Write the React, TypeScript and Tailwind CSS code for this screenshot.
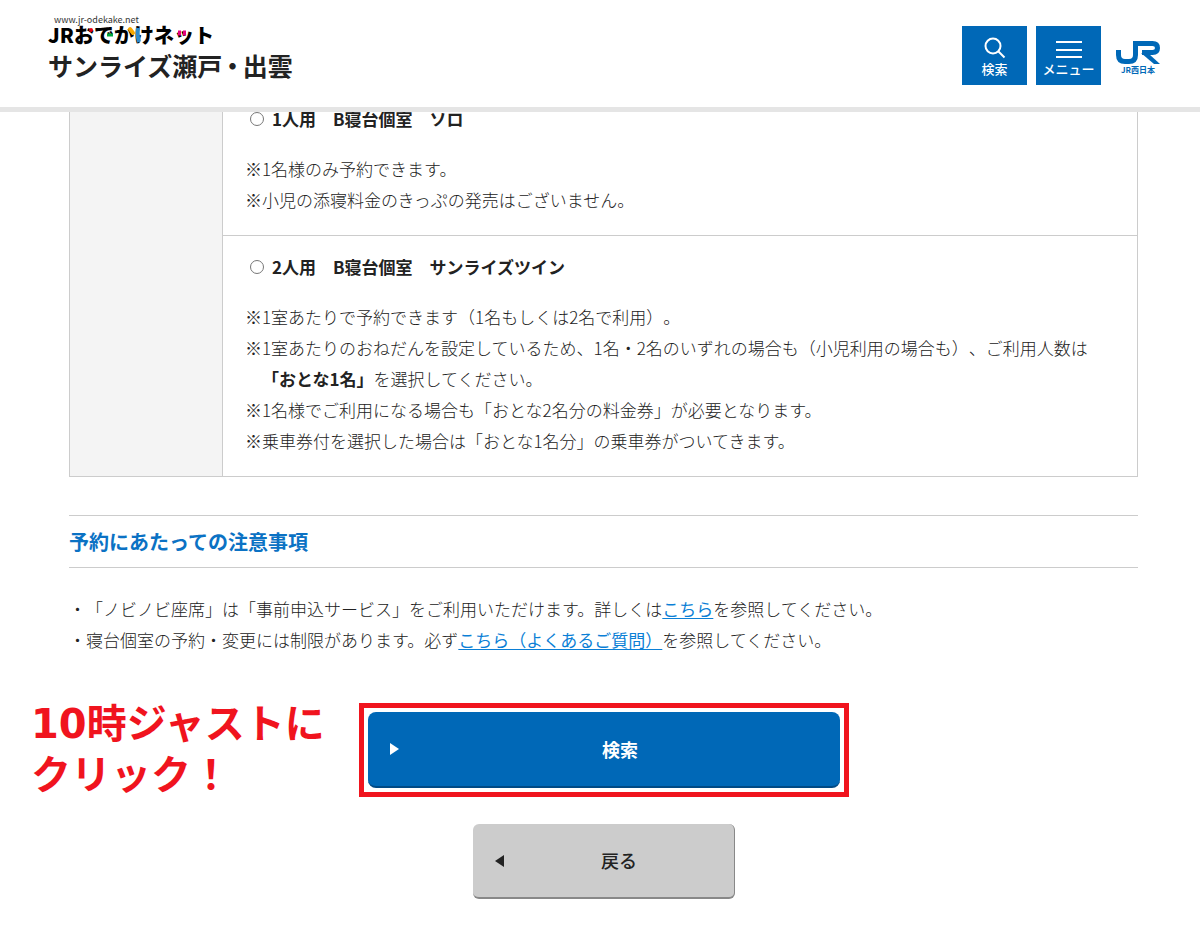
import { useState } from 'react';

const roomTypes = [
  {
    id: 'solo',
    name: '1人用　B寝台個室　ソロ',
    notes: [
      { text: '※1名様のみ予約できます。' },
      { text: '※小児の添寝料金のきっぷの発売はございません。' },
    ],
  },
  {
    id: 'twin',
    name: '2人用　B寝台個室　サンライズツイン',
    notes: [
      { text: '※1室あたりで予約できます（1名もしくは2名で利用）。' },
      {
        text: '※1室あたりのおねだんを設定しているため、1名・2名のいずれの場合も（小児利用の場合も）、ご利用人数は',
        strong: '「おとな1名」',
        rest: 'を選択してください。',
      },
      { text: '※1名様でご利用になる場合も「おとな2名分の料金券」が必要となります。' },
      { text: '※乗車券付を選択した場合は「おとな1名分」の乗車券がついてきます。' },
    ],
  },
];

const SiteLogo = () => (
  <a href="#top" className="block w-fit text-black">
    <span className="block pl-1.5 text-[9px] leading-[10px] font-normal text-[#333]">www.jr-odekake.net</span>
    <span className="relative block text-[20px] leading-[20px] font-black whitespace-nowrap">
      JRおでかけネット
      <svg className="absolute top-0 left-0 h-5 w-[165px]" viewBox="0 0 165 20" aria-hidden="true">
        <circle cx="43" cy="5" r="2" fill="#e60012" />
        <path d="M59 10h6" stroke="#00a63c" strokeWidth="3" />
        <path d="M82 4l3 4" stroke="#f8a900" strokeWidth="4" strokeLinecap="round" />
        <path d="M90 3q-1 8 1 14" stroke="#2e8bcc" strokeWidth="4" fill="none" />
        <path d="M130 8h3M135 8h3" stroke="#e5007f" strokeWidth="5" />
      </svg>
    </span>
  </a>
);

const JrWestLogo = () => (
  <a href="#jrwest" className="flex w-11 flex-col items-center text-[#0068b7]">
    <svg className="h-6 w-11" viewBox="0 0 44 24" aria-hidden="true">
      <path
        d="M2.500 9v5q0 6.500 6.500 6.500h4q6.500 0 6.500-6.500V2.500h17q5 0 5 4.500t-5 4.500H26"
        fill="none"
        stroke="currentColor"
        strokeWidth="5"
      />
      <path d="M25 12l13 11h6L33 13z" fill="currentColor" />
    </svg>
    <span className="text-[8px] leading-[10px] font-bold whitespace-nowrap">JR西日本</span>
  </a>
);

const Header = () => (
  <header className="sticky top-0 z-10 flex h-28 items-start justify-between border-b-[5px] border-[#e5e5e5] bg-white pr-10 pl-12">
    <div className="pt-[15px]">
      <SiteLogo />
      <h1 className="mt-1 text-[25px] leading-[32px] font-bold text-[#222]">
        サンライズ瀬戸
        <span className="px-1 [font-feature-settings:'halt']">・</span>
        出雲
      </h1>
    </div>
    <div className="flex items-start gap-[9px] pt-[26px]">
      <button className="flex h-[59px] w-[65px] flex-col items-center bg-[#0068b7] pt-2 text-white">
        <svg className="h-7 w-7" viewBox="0 0 28 28" fill="none" stroke="currentColor" strokeWidth="2" aria-hidden="true">
          <circle cx="12" cy="12" r="7.500" />
          <path d="M17.500 17.500l6 6" />
        </svg>
        <span className="text-[13px] leading-[14px] font-medium">検索</span>
      </button>
      <button className="flex h-[59px] w-[65px] flex-col items-center bg-[#0068b7] pt-2 text-white">
        <svg className="h-7 w-7" viewBox="0 0 28 28" fill="none" stroke="currentColor" strokeWidth="2" aria-hidden="true">
          <path d="M1 8h26M1 16h26M1 23h26" />
        </svg>
        <span className="text-[13px] leading-[14px] font-medium whitespace-nowrap">メニュー</span>
      </button>
      <div className="ml-1.5 pt-[15px]">
        <JrWestLogo />
      </div>
    </div>
  </header>
);

export default function App() {
  const [room, setRoom] = useState('');

  return (
    <div
      lang="ja"
      className="bg-white font-['Noto_Sans_CJK_JP',sans-serif] text-[17px] leading-[31px] font-light text-[#222] [text-spacing-trim:space-all]"
    >
      <Header />

      {/* the table is scrolled a little way under the sticky header */}
      <main className="-mt-[25px]">
        <div className="pr-[62px] pl-[69px]">
          <table className="w-full border-collapse border border-[#ccc]">
            <tbody>
              {roomTypes.map((type, index) => (
                <tr key={type.id}>
                  {index === 0 && (
                    <th rowSpan={roomTypes.length} className="w-[153px] border border-[#ccc] bg-[#f4f4f4]" />
                  )}
                  <td className="border border-[#ccc] px-[22px] pt-[15px] pb-5">
                    <label className="flex items-center gap-2 pl-[5px] font-bold">
                      <input
                        type="radio"
                        name="room"
                        value={type.id}
                        checked={room === type.id}
                        onChange={() => setRoom(type.id)}
                        className="h-[14px] w-[14px] appearance-none rounded-full border border-[#777] bg-white checked:border-4 checked:border-[#0068b7]"
                      />
                      {type.name}
                    </label>
                    <ul className="mt-[19px]">
                      {type.notes.map((note) => (
                        <li key={note.text}>
                          {note.text}
                          {note.strong && (
                            <span className="block pl-[17px]">
                              <strong className="font-bold">{note.strong}</strong>
                              {note.rest}
                            </span>
                          )}
                        </li>
                      ))}
                    </ul>
                  </td>
                </tr>
              ))}
            </tbody>
          </table>

          <h2 className="mt-[38px] border-y border-[#ccc] py-[10px] text-[20px] font-bold text-[#0b72c4]">
            予約にあたっての注意事項
          </h2>

          <ul className="mt-[25px]">
            <li>
              ・「ノビノビ座席」は「事前申込サービス」をご利用いただけます。詳しくは
              <a href="#service" className="font-normal text-[#0b7fd6] underline underline-offset-2">こちら</a>
              を参照してください。
            </li>
            <li>
              ・寝台個室の予約・変更には制限があります。必ず
              <a href="#faq" className="font-normal text-[#0b7fd6] underline underline-offset-2">こちら（よくあるご質問）</a>
              を参照してください。
            </li>
          </ul>
        </div>

        <div className="mt-11 grid grid-cols-[1fr_490px_1fr] items-center pr-[23px] pl-[31px]">
          <p className="font-['DejaVu_Sans','Noto_Sans_CJK_JP',sans-serif] text-[40px] leading-[51px] font-bold whitespace-nowrap text-[#f0141e]">
            10時ジャストに
            <br />
            クリック！
          </p>
          <div className="border-[5px] border-[#f0141e] p-1">
            <button className="flex h-[76px] w-full items-center rounded-lg border-b-2 border-[#004a85] bg-[#0068b7] px-5 text-[18px] font-bold text-white">
              <svg className="h-3 w-3" viewBox="0 0 12 12" fill="currentColor" aria-hidden="true">
                <path d="M2 0l9 6-9 6z" />
              </svg>
              <span className="flex-1 pl-5 text-center">検索</span>
            </button>
          </div>
        </div>

        <div className="mt-[23px] flex justify-center pr-[62px] pb-[26px] pl-[69px]">
          <button className="flex h-[75px] w-[262px] items-center rounded-md border-r border-b-2 border-[#888] bg-[#ccc] px-5 text-[18px] font-medium text-[#222]">
            <svg className="h-3 w-3" viewBox="0 0 12 12" fill="currentColor" aria-hidden="true">
              <path d="M11 0L2 6l9 6z" />
            </svg>
            <span className="flex-1 pl-5 text-center">戻る</span>
          </button>
        </div>
      </main>
    </div>
  );
}
